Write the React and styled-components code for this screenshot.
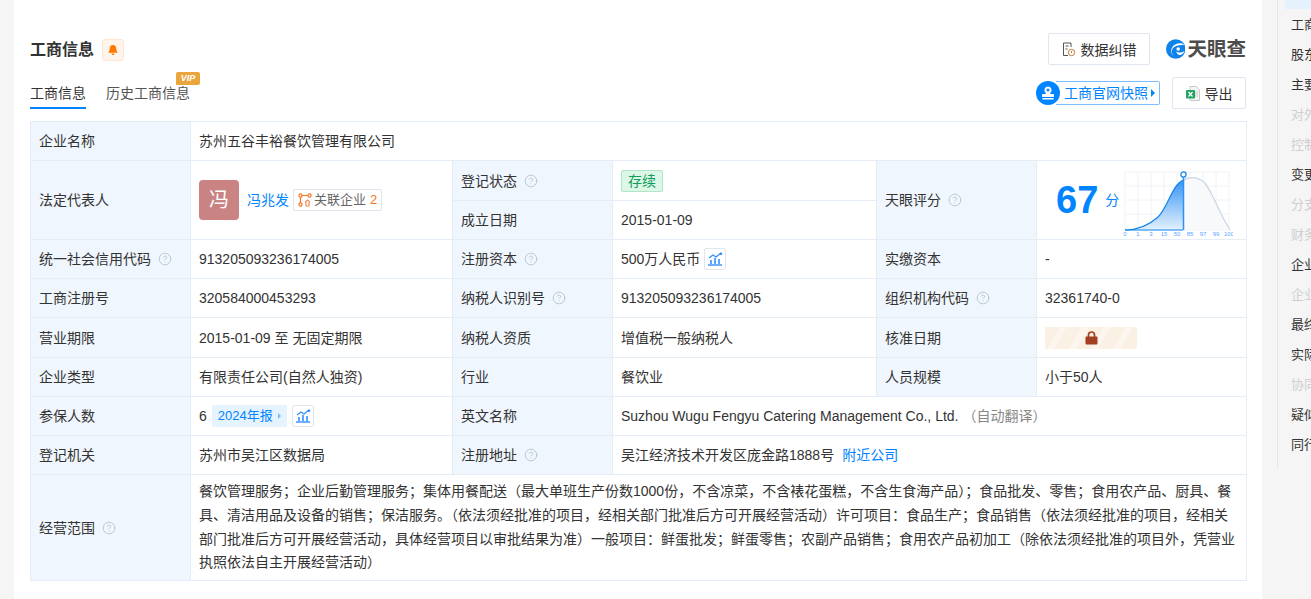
import React from 'react';
import styled, { createGlobalStyle } from 'styled-components';
import { CircleHelp } from 'lucide-react';

const GlobalStyle = createGlobalStyle`
  html, body {
    margin: 0;
    padding: 0;
    height: 599px;
    overflow: hidden;
    background: #f5f5f5;
    font-family: "Liberation Sans", "Noto Sans CJK SC", sans-serif;
    font-size: 14px;
    color: #333;
  }
`;

const Page = styled.div`
  display: flex;
  height: 599px;
  overflow: hidden;
  padding-left: 14px;
  background: #f5f5f5;
`;

const Card = styled.main`
  width: 1248px;
  flex: none;
  box-sizing: border-box;
  padding: 33px 16px 0;
  background: #fff;
`;

const TopRow = styled.div`
  display: flex;
  align-items: center;
  justify-content: space-between;
  height: 32px;
`;

const TitleGroup = styled.div`
  display: flex;
  align-items: center;
  gap: 8px;
  margin-top: 2px;
`;

const Title = styled.h2`
  margin: 0;
  font-size: 16px;
  font-weight: 700;
  line-height: 22px;
  color: #333;
`;

const BellBadge = styled.span`
  display: flex;
  align-items: center;
  justify-content: center;
  width: 22px;
  height: 22px;
  box-sizing: border-box;
  background: #fff4eb;
  border: 1px solid #ffe6d2;
  border-radius: 3px;
`;

const TopActions = styled.div`
  display: flex;
  align-items: center;
  gap: 16px;
`;

const OutlineButton = styled.button`
  display: flex;
  align-items: center;
  justify-content: center;
  gap: 5px;
  width: ${p => p.$width}px;
  height: 32px;
  padding: 0;
  box-sizing: border-box;
  background: #fff;
  border: 1px solid #e0e6ef;
  border-radius: 2px;
  font: inherit;
  color: #333;
`;

const Logo = styled.div`
  display: flex;
  align-items: center;
  gap: 2px;
  width: 80px;
`;

const LogoText = styled.span`
  font-size: 19.5px;
  font-weight: 700;
  line-height: 24px;
  color: #4c4c4c;
  white-space: nowrap;
`;

const TabRow = styled.div`
  display: flex;
  align-items: flex-end;
  justify-content: space-between;
  height: 32px;
  margin-top: 12px;
`;

const Tabs = styled.div`
  display: flex;
  gap: 20px;
  height: 31px;
`;

const Tab = styled.div`
  position: relative;
  height: 31px;
  box-sizing: border-box;
  padding-top: 5px;
  line-height: 20px;
  color: ${p => (p.$active ? '#333' : '#555')};
  border-bottom: 2px solid ${p => (p.$active ? '#0084ff' : 'transparent')};
`;

const VipMark = styled.span`
  position: absolute;
  right: -10px;
  top: -6px;
  width: 24px;
  height: 13px;
  display: flex;
  align-items: center;
  justify-content: center;
  background: #eaa63c;
  border-radius: 2px 2px 2px 0;
  font-size: 9px;
  font-weight: 700;
  font-style: italic;
  line-height: 11px;
  color: #fff;
`;

const RightTools = styled.div`
  display: flex;
  align-items: center;
  gap: 12px;
`;

const SnapshotLink = styled.div`
  display: flex;
  align-items: center;
  height: 24px;
`;

const SnapshotIcon = styled.span`
  display: flex;
  align-items: center;
  justify-content: center;
  width: 24px;
  height: 24px;
  border-radius: 50%;
  background: #0084ff;
  flex: none;
  position: relative;
  z-index: 1;
`;

const SnapshotLabel = styled.span`
  display: flex;
  align-items: center;
  gap: 3px;
  height: 24px;
  box-sizing: border-box;
  margin-left: -4px;
  padding: 0 4px 0 8px;
  border: 1px solid #7dbdff;
  border-left: none;
  border-radius: 0 2px 2px 0;
  color: #0084ff;
  line-height: 22px;
`;

const Caret = styled.i`
  display: inline-block;
  width: 0;
  height: 0;
  border-left: ${p => p.$size || 4}px solid ${p => p.$color || '#0084ff'};
  border-top: ${p => p.$size || 4}px solid transparent;
  border-bottom: ${p => p.$size || 4}px solid transparent;
`;

const InfoTable = styled.table`
  width: 1216px;
  margin-top: 12px;
  border-collapse: collapse;
  table-layout: fixed;
  line-height: 20px;
`;

const Row = styled.tr`
  height: ${p => p.$h}px;
`;

const Label = styled.td`
  box-sizing: border-box;
  padding: 0 8px;
  background: #f0f6fd;
  border: 1px solid #e4ecf5;
  color: #333;
  white-space: nowrap;
`;

const Value = styled.td`
  box-sizing: border-box;
  padding: 0 8px;
  border: 1px solid #e4ecf5;
  color: #333;
  white-space: nowrap;
`;

const ScopeValue = styled(Value)`
  padding: 0 8px;
  white-space: normal;
  line-height: 23.6px;
`;

const LabelInner = styled.span`
  display: inline-flex;
  align-items: center;
  gap: 7px;
`;

const Inline = styled.div`
  display: flex;
  align-items: center;
  gap: ${p => p.$gap ?? 4}px;
`;

const Avatar = styled.div`
  display: flex;
  align-items: center;
  justify-content: center;
  width: 40px;
  height: 40px;
  flex: none;
  border-radius: 4px;
  background: #c98383;
  color: #fff;
  font-size: 20px;
`;

const PersonLink = styled.a`
  color: #0084ff;
  margin-left: 4px;
`;

const RelatedTag = styled.span`
  display: inline-flex;
  align-items: center;
  gap: 2px;
  height: 22px;
  box-sizing: border-box;
  padding: 0 4px;
  border: 1px solid #dfe4ee;
  border-radius: 2px;
  font-size: 13px;
  color: #666;
`;

const RelatedCount = styled.span`
  color: #f5741e;
  margin-left: 2px;
`;

const StatusTag = styled.span`
  display: inline-flex;
  align-items: center;
  justify-content: center;
  width: 42px;
  height: 22px;
  box-sizing: border-box;
  background: #dcf7e8;
  border: 1px solid #aee6c6;
  border-radius: 2px;
  color: #0f9d58;
`;

const ChartButton = styled.span`
  display: inline-flex;
  align-items: center;
  justify-content: center;
  width: 22px;
  height: 22px;
  box-sizing: border-box;
  border: 1px solid #e0e6ef;
  border-radius: 2px;
  background: #fff;
`;

const ScoreWrap = styled.div`
  display: flex;
  align-items: center;
  justify-content: space-between;
  padding: 0 5px 0 11px;
`;

const ScoreNumber = styled.span`
  font-size: 38px;
  font-weight: 700;
  line-height: 44px;
  color: #0084ff;
`;

const ScoreUnit = styled.span`
  margin-left: 7px;
  color: #0084ff;
`;

const LockedBar = styled.div`
  display: flex;
  align-items: center;
  justify-content: center;
  width: 92px;
  height: 22px;
  border-radius: 2px;
  background: repeating-linear-gradient(
    120deg,
    #fbf0e4 0 13px,
    #fdf6ee 13px 19px
  );
`;

const YearTag = styled.span`
  display: inline-flex;
  align-items: center;
  gap: 5px;
  height: 22px;
  padding: 0 6px;
  border-radius: 2px;
  background: #e5f3ff;
  color: #0084ff;
  font-size: 13px;
`;

const Muted = styled.span`
  color: #888;
`;

const Link = styled.a`
  color: #0084ff;
  margin-left: 8px;
`;

const Side = styled.nav`
  position: relative;
  flex: 1;
  min-width: 0;
  overflow: hidden;
  margin-left: 15px;
  height: 459px;
  border-left: 1px solid #dfe6ef;
  padding: 10px 0 0 13px;
`;

const SideHighlight = styled.div`
  position: absolute;
  left: 7px;
  top: 0;
  width: 40px;
  height: 9px;
  background: #e5f1fd;
`;

const SideItem = styled.div`
  height: 30px;
  line-height: 30px;
  white-space: nowrap;
  font-size: 13px;
  color: ${p => (p.$off ? '#cfcfcf' : '#333')};
`;

const Help = () => <CircleHelp size={14} color="#b9c6d3" strokeWidth={1.6} />;

const MiniChart = () => (
  <svg width="16" height="14" viewBox="0 0 16 14">
    <path d="M1 13h14" stroke="#2f8cff" strokeWidth="1.4" />
    <path d="M3 12V8h2v4zM7 12V6h2v6zM11 12V7h2v5z" fill="#5aa5ff" />
    <path d="M2 6l4-3 3 2 5-4" fill="none" stroke="#2f8cff" strokeWidth="1.2" />
    <circle cx="14" cy="1.8" r="1.3" fill="#2f8cff" />
  </svg>
);

const Bell = () => (
  <svg width="12" height="12" viewBox="0 0 12 12">
    <path d="M6 1c2.200 0 3.300 1.700 3.300 3.800 0 1.800.6 2.700 1.300 3.400v.6H1.400v-.6c.7-.7 1.300-1.600 1.300-3.400C2.700 2.700 3.800 1 6 1z" fill="#ff7a00" />
    <path d="M4.500 9.600h3L6.900 11H5.100z" fill="#ff7a00" />
  </svg>
);

const DocIcon = () => (
  <svg width="14" height="15" viewBox="0 0 14 15" fill="none" stroke="#555" strokeWidth="1">
    <path d="M9 1H1.500v12.500H6" />
    <path d="M9 1v4" />
    <path d="M3.500 4h3M3.500 7h2" />
    <circle cx="9.500" cy="10.500" r="3.200" stroke="#c0783c" />
    <path d="M9.500 9v2" stroke="#c0783c" />
  </svg>
);

const ExcelIcon = () => (
  <svg width="14" height="15" viewBox="0 0 14 15">
    <path d="M4 .5h6.500L13.500 4v10.500H4z" fill="#f4f4f4" stroke="#c9c9c9" />
    <path d="M9 6h3M9 8h3M9 10h3" stroke="#c9c9c9" />
    <rect x="0" y="4" width="9" height="8.500" rx="1" fill="#1fa463" />
    <path d="M2.500 6l4 4.500M6.500 6l-4 4.500" stroke="#fff" strokeWidth="1.200" />
  </svg>
);

const StampIcon = () => (
  <svg width="16" height="16" viewBox="0 0 16 16" fill="#fff">
    <path d="M8 1.500a3.600 3.600 0 0 1 2.600 6.100c-.5.500-.6 1-.2 1.500h2.600c.6 0 1 .4 1 1V12H2v-1.900c0-.6.4-1 1-1h2.600c.4-.5.3-1-.2-1.500A3.600 3.600 0 0 1 8 1.500z" />
    <rect x="2.500" y="13" width="11" height="1.500" />
    <circle cx="8" cy="5" r="1.500" fill="#0084ff" />
  </svg>
);

const RelatedIcon = () => (
  <svg width="14" height="14" viewBox="0 0 14 14" fill="none" stroke="#f5741e" strokeWidth="1.200">
    <circle cx="2.500" cy="2.500" r="1.600" />
    <circle cx="11.500" cy="2.500" r="1.600" />
    <circle cx="2.500" cy="11.500" r="1.600" />
    <path d="M4.200 2.500h5.600M2.500 4.200v5.600" />
    <path d="M7 9.500l2.500-2.500 2.500 2.500M8 9.500V13h3V9.500" stroke="#e98e5b" />
  </svg>
);

const LockIcon = () => (
  <svg width="13" height="14" viewBox="0 0 13 14">
    <path d="M3.500 6V4a3 3 0 0 1 6 0v2" fill="none" stroke="#a33f22" strokeWidth="1.700" />
    <rect x="0.500" y="5.500" width="12" height="8" rx="1" fill="#a33f22" />
  </svg>
);

const TycLogo = () => (
  <svg width="20" height="20" viewBox="0 0 20 20">
    <circle cx="10" cy="10" r="10" fill="#0f83ea" />
    <path d="M19 5.500C15 3 8.500 4 6 9c-1.500 3-.5 6.500 2 9 -3-4-2.500-8 .5-10 3-2 7-1.500 10.500-2.500z" fill="#fff" />
    <path d="M10.500 12.500c2 1.800 5.500 1.500 8.500-.5-1 2.500-3 4-5.500 4.200-1.500-.8-2.500-2-3-3.700z" fill="#fff" />
    <circle cx="12.500" cy="10" r="1.800" fill="#fff" />
  </svg>
);

// 分位曲线，x 0-105 对应 0-100 的刻度
const curve = 'M0 58 C12 58 22 55 33 45 C42 36 46 18 54 11 C60 6 68 4 76 8 C81 10 85 19 90 29 C96 42 100 50 105 58';
const ticks = ['0', '1', '3', '15', '50', '85', '97', '99', '100'];

const ScoreChart = () => (
  <svg width="110" height="72" viewBox="-2 -8 110 72">
    <defs>
      <linearGradient id="scoreFill" x1="0" y1="0" x2="0" y2="1">
        <stop offset="0" stopColor="#2f90f5" />
        <stop offset="1" stopColor="#e4f1fd" />
      </linearGradient>
      <clipPath id="scoreLeft">
        <rect x="0" y="-8" width="58.500" height="72" />
      </clipPath>
      <clipPath id="scoreRight">
        <rect x="58.500" y="-8" width="50" height="72" />
      </clipPath>
    </defs>
    {[0, 13, 26, 39, 52, 65, 78, 91, 104].map(x => (
      <path key={x} d={`M${x} 0V58`} stroke="#eef2f7" strokeWidth="1" />
    ))}
    {[0, 14, 28, 42, 58].map(y => (
      <path key={y} d={`M0 ${y}H105`} stroke="#eef2f7" strokeWidth="1" />
    ))}
    <path d={`${curve}Z`} fill="#f7f9fb" clipPath="url(#scoreRight)" />
    <path d={curve} fill="none" stroke="#c8d6e4" strokeWidth="1.200" clipPath="url(#scoreRight)" />
    <path d={`${curve}Z`} fill="url(#scoreFill)" clipPath="url(#scoreLeft)" />
    <path d={curve} fill="none" stroke="#0f83ea" strokeWidth="1.200" clipPath="url(#scoreLeft)" />
    <path d="M58.500 4V58" stroke="#2f90f5" strokeWidth="1.500" />
    <circle cx="58.500" cy="2.500" r="2.600" fill="#fff" stroke="#0f83ea" strokeWidth="1.200" />
    <path d="M0 58H58" stroke="#0f83ea" strokeWidth="1.200" />
    {ticks.map((t, i) => (
      <text key={t} x={i * 13} y="64" fontSize="6" fontFamily="Liberation Sans" fill="#5aa5ff" textAnchor="middle">{t}</text>
    ))}
  </svg>
);

const sideItems = [
  ['工商信息'], ['股东信息'], ['主要人员'], ['对外投资', true], ['控制企业', true],
  ['变更记录'], ['分支机构', true], ['财务简析', true], ['企业年报'], ['企业关系', true],
  ['最终受益人'], ['实际控制人'], ['协同股东', true], ['疑似关系'], ['同行分析'],
];

export default function App() {
  return (
    <Page>
      <GlobalStyle />
      <Card>
        <TopRow>
          <TitleGroup>
            <Title>工商信息</Title>
            <BellBadge><Bell /></BellBadge>
          </TitleGroup>
          <TopActions>
            <OutlineButton $width={102}><DocIcon />数据纠错</OutlineButton>
            <Logo><TycLogo /><LogoText>天眼查</LogoText></Logo>
          </TopActions>
        </TopRow>
        <TabRow>
          <Tabs>
            <Tab $active>工商信息</Tab>
            <Tab>历史工商信息<VipMark>VIP</VipMark></Tab>
          </Tabs>
          <RightTools>
            <SnapshotLink>
              <SnapshotIcon><StampIcon /></SnapshotIcon>
              <SnapshotLabel>工商官网快照<Caret $size={4} /></SnapshotLabel>
            </SnapshotLink>
            <OutlineButton $width={74}><ExcelIcon />导出</OutlineButton>
          </RightTools>
        </TabRow>
        <InfoTable>
          <colgroup>
            <col style={{ width: 160 }} />
            <col style={{ width: 262 }} />
            <col style={{ width: 160 }} />
            <col style={{ width: 264 }} />
            <col style={{ width: 160 }} />
            <col style={{ width: 210 }} />
          </colgroup>
          <tbody>
            <Row $h={39}>
              <Label>企业名称</Label>
              <Value colSpan={5}>苏州五谷丰裕餐饮管理有限公司</Value>
            </Row>
            <Row $h={40}>
              <Label rowSpan={2}>法定代表人</Label>
              <Value rowSpan={2}>
                <Inline>
                  <Avatar>冯</Avatar>
                  <PersonLink>冯兆发</PersonLink>
                  <RelatedTag><RelatedIcon />关联企业<RelatedCount>2</RelatedCount></RelatedTag>
                </Inline>
              </Value>
              <Label><LabelInner>登记状态<Help /></LabelInner></Label>
              <Value><StatusTag>存续</StatusTag></Value>
              <Label rowSpan={2}><LabelInner>天眼评分<Help /></LabelInner></Label>
              <Value rowSpan={2}>
                <ScoreWrap>
                  <Inline $gap={0}>
                    <ScoreNumber>67</ScoreNumber>
                    <ScoreUnit>分</ScoreUnit>
                  </Inline>
                  <ScoreChart />
                </ScoreWrap>
              </Value>
            </Row>
            <Row $h={39}>
              <Label>成立日期</Label>
              <Value>2015-01-09</Value>
            </Row>
            <Row $h={39}>
              <Label><LabelInner>统一社会信用代码<Help /></LabelInner></Label>
              <Value>913205093236174005</Value>
              <Label><LabelInner>注册资本<Help /></LabelInner></Label>
              <Value><Inline>500万人民币<ChartButton><MiniChart /></ChartButton></Inline></Value>
              <Label>实缴资本</Label>
              <Value>-</Value>
            </Row>
            <Row $h={39}>
              <Label>工商注册号</Label>
              <Value>320584000453293</Value>
              <Label><LabelInner>纳税人识别号<Help /></LabelInner></Label>
              <Value>913205093236174005</Value>
              <Label><LabelInner>组织机构代码<Help /></LabelInner></Label>
              <Value>32361740-0</Value>
            </Row>
            <Row $h={40}>
              <Label>营业期限</Label>
              <Value>2015-01-09 至 无固定期限</Value>
              <Label>纳税人资质</Label>
              <Value>增值税一般纳税人</Value>
              <Label>核准日期</Label>
              <Value><LockedBar><LockIcon /></LockedBar></Value>
            </Row>
            <Row $h={39}>
              <Label>企业类型</Label>
              <Value>有限责任公司(自然人独资)</Value>
              <Label>行业</Label>
              <Value>餐饮业</Value>
              <Label>人员规模</Label>
              <Value>小于50人</Value>
            </Row>
            <Row $h={39}>
              <Label>参保人数</Label>
              <Value>
                <Inline $gap={5}>
                  6
                  <YearTag>2024年报<Caret $size={3} $color="#7dbdff" /></YearTag>
                  <ChartButton><MiniChart /></ChartButton>
                </Inline>
              </Value>
              <Label>英文名称</Label>
              <Value colSpan={3}>Suzhou Wugu Fengyu Catering Management Co., Ltd. <Muted>（自动翻译）</Muted></Value>
            </Row>
            <Row $h={39}>
              <Label>登记机关</Label>
              <Value>苏州市吴江区数据局</Value>
              <Label><LabelInner>注册地址<Help /></LabelInner></Label>
              <Value colSpan={3}>吴江经济技术开发区庞金路1888号<Link>附近公司</Link></Value>
            </Row>
            <Row $h={106}>
              <Label><LabelInner>经营范围<Help /></LabelInner></Label>
              <ScopeValue colSpan={5}>
                餐饮管理服务；企业后勤管理服务；集体用餐配送（最大单班生产份数1000份，不含凉菜，不含裱花蛋糕，不含生食海产品）；食品批发、零售；食用农产品、厨具、餐具、清洁用品及设备的销售；保洁服务。（依法须经批准的项目，经相关部门批准后方可开展经营活动）许可项目：食品生产；食品销售（依法须经批准的项目，经相关部门批准后方可开展经营活动，具体经营项目以审批结果为准）一般项目：鲜蛋批发；鲜蛋零售；农副产品销售；食用农产品初加工（除依法须经批准的项目外，凭营业执照依法自主开展经营活动）
              </ScopeValue>
            </Row>
          </tbody>
        </InfoTable>
      </Card>
      <Side>
        <SideHighlight />
        {sideItems.map(([name, off]) => (
          <SideItem key={name} $off={off}>{name}</SideItem>
        ))}
      </Side>
    </Page>
  );
}
